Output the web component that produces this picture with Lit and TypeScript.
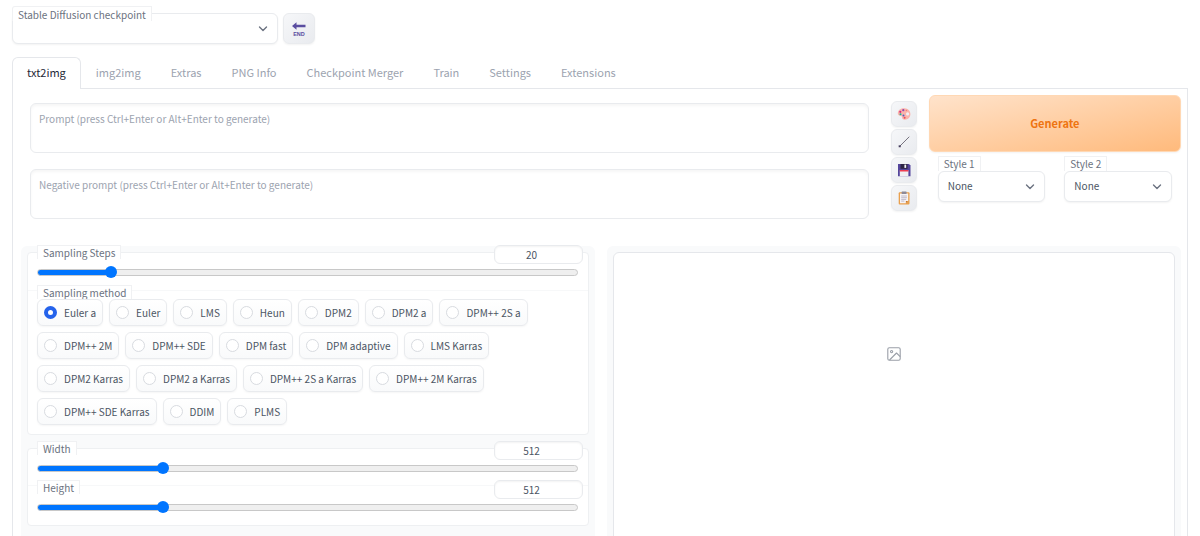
import { LitElement, html, css, svg } from "lit";
import { customElement, state, property } from "lit/decorators.js";
import { styleMap } from "lit/directives/style-map.js";
import { classMap } from "lit/directives/class-map.js";

const shared = css`
  * {
    box-sizing: border-box;
  }
  button,
  input,
  select,
  textarea {
    font: inherit;
    color: inherit;
    margin: 0;
  }
  .tag {
    display: block;
    width: max-content;
    height: 14px;
    padding: 0 5px;
    font-size: 10px;
    line-height: 14px;
    color: #6b7280;
    background: #fff;
    border: solid #f0f1f3;
    border-width: 1px 1px 0;
    white-space: nowrap;
  }
`;

@customElement("drop-down")
export class DropDown extends LitElement {
  @property() label = "";
  @property({ type: Boolean, reflect: true }) inset = false;
  @property({ type: Array }) options: string[] = [];

  static styles = [
    shared,
    css`
      :host {
        display: block;
        min-width: 0;
      }
      .box {
        display: grid;
        align-items: center;
      }
      select,
      svg {
        grid-area: 1 / 1;
      }
      select {
        appearance: none;
        width: 100%;
        height: 31px;
        padding: 0 28px 2px 9px;
        font-size: 10px;
        line-height: 16px;
        color: #4b5563;
        background: #fff;
        border: 1px solid #e9ebee;
        border-radius: 6px;
        box-shadow: 0 1px 2px rgba(0, 0, 0, 0.05);
      }
      svg {
        justify-self: end;
        margin-right: 10px;
        pointer-events: none;
      }
      .tag {
        height: 15px;
      }
      :host([inset]) .tag {
        position: relative;
        z-index: 1;
        margin-bottom: -8px;
        line-height: 16px;
        border-radius: 3px 0 0 0;
      }
    `,
  ];

  render() {
    return html`
      <label class="tag" for="pick">${this.label}</label>
      <div class="box">
        <select id="pick">
          ${this.options.map((o) => html`<option>${o}</option>`)}
        </select>
        <svg width="10" height="10" viewBox="0 0 10 10" aria-hidden="true">
          <path d="M1.5 3 L5 6.5 L8.5 3" fill="none" stroke="#6b7280" stroke-width="1.4" stroke-linecap="round" stroke-linejoin="round" />
        </svg>
      </div>
    `;
  }
}

@customElement("slider-field")
export class SliderField extends LitElement {
  @property() label = "";
  @property({ type: Number }) min = 0;
  @property({ type: Number }) max = 100;
  @property({ type: Number }) step = 1;
  @property({ type: Number }) value = 0;

  static styles = [
    shared,
    css`
      :host {
        display: block;
      }
      .head {
        display: flex;
        justify-content: space-between;
        align-items: flex-start;
      }
      .number {
        width: 89px;
        height: 19px;
        padding: 0 20px 0 6px;
        font-size: 10px;
        line-height: 16px;
        text-align: center;
        color: #4b5563;
        background: #fff;
        border: 1px solid #e9ebee;
        border-radius: 6px;
        box-shadow: inset 0 1px 2px rgba(0, 0, 0, 0.05);
        appearance: textfield;
      }
      .number::-webkit-inner-spin-button {
        display: none;
      }
      .range {
        appearance: none;
        display: block;
        width: calc(100% - 5px);
        height: 12px;
        margin-top: 2px;
        background: none;
      }
      .range::-webkit-slider-runnable-track {
        height: 7px;
        border-radius: 4px;
        border: 1px solid #c8c8c8;
        background: linear-gradient(#0075ff, #0075ff) 0 0 / var(--fill) 100% no-repeat border-box, #efefef;
      }
      .range::-webkit-slider-thumb {
        appearance: none;
        width: 12px;
        height: 12px;
        margin-top: -4px;
        border-radius: 50%;
        background: #0075ff;
      }
    `,
  ];

  private onValue(e: Event) {
    this.value = Number((e.target as HTMLInputElement).value);
  }

  render() {
    const fill = ((this.value - this.min) / (this.max - this.min)) * 100;
    return html`
      <div class="head">
        <label class="tag" for="range">${this.label}</label>
        <input class="number" type="number" aria-label=${this.label} min=${this.min} max=${this.max} step=${this.step} .value=${String(this.value)} @input=${this.onValue} />
      </div>
      <input class="range" id="range" type="range" min=${this.min} max=${this.max} step=${this.step} .value=${String(this.value)} style=${styleMap({ "--fill": fill + "%" })} @input=${this.onValue} />
    `;
  }
}

const palette = svg`<svg width="14" height="14" viewBox="0 0 14 14">
  <path d="M7.500 1.300C4.200 1.100 1 2.900.8 6c-.1 1.900 1.200 2.800 2.600 2.800 1.300 0 1.500.8 1.600 1.700.2 1.500 1.300 2.200 2.900 2.200 3.200 0 5.500-2.600 5.500-5.700 0-3.400-2.600-5.500-5.900-5.700Zm3.100 4a1.600 1.600 0 1 1 0 3.200 1.600 1.600 0 0 1 0-3.200Z" fill="#fbb3ab" fill-rule="evenodd"/>
  <circle cx="6.300" cy="3.200" r="1.100" fill="#8b4bb0"/><circle cx="3.300" cy="4.800" r="1.100" fill="#d8287c"/>
  <circle cx="3.500" cy="7.200" r="1" fill="#18b892"/><circle cx="6.500" cy="8.400" r="1" fill="#4b63c8"/><circle cx="7.600" cy="10.800" r="1" fill="#e8505b"/><circle cx="9.400" cy="3.500" r=".8" fill="#ee8478"/>
</svg>`;
const arrow = svg`<svg width="14" height="14" viewBox="0 0 14 14">
  <path d="M2.800 11.200 12 2" stroke="#77737f" stroke-width="1" stroke-linecap="round"/>
  <path d="M1.700 10.300 3.700 10.500 3.800 12.300 1.700 12.300Z" fill="#433b5b"/>
</svg>`;
const floppy = svg`<svg width="14" height="14" viewBox="0 0 14 14">
  <path d="M1 1h11l1.500 1.500V13.300H1Z" fill="#54459b"/>
  <rect x="3.500" y="1" width="7" height="4.800" fill="#2c2444"/><rect x="7.400" y="1.600" width="1.800" height="3.300" fill="#f4f4f4"/>
  <rect x="2.800" y="7.200" width="8.600" height="6.100" fill="#efeff2"/><rect x="2.800" y="7" width="8.600" height="1.500" fill="#ef3e52"/>
</svg>`;
const clipboard = svg`<svg width="14" height="14" viewBox="0 0 14 14">
  <rect x="1.700" y="1.200" width="10.800" height="12.300" rx="1" fill="#e9a04e"/><path d="M3 2.500h8.200v7.400l-2.300 2.400H3Z" fill="#f6f3f6"/>
  <path d="M11.200 9.900H8.900v2.400Z" fill="#c87728"/><rect x="4.600" y=".5" width="5" height="2.400" rx=".6" fill="#8d8998"/>
  <path d="M4.200 5h5.700M4.200 6.700h5.700M4.200 8.400h5M4.200 10.100h3.200" stroke="#aaa4b8" stroke-width=".7"/>
</svg>`;

@customElement("app-root")
export class AppRoot extends LitElement {
  @state() private tab = "txt2img";
  @state() private method = "Euler a";

  private tabs = ["txt2img", "img2img", "Extras", "PNG Info", "Checkpoint Merger", "Train", "Settings", "Extensions"];
  private methods = [
    "Euler a", "Euler", "LMS", "Heun", "DPM2", "DPM2 a", "DPM++ 2S a", "DPM++ 2M", "DPM++ SDE",
    "DPM fast", "DPM adaptive", "LMS Karras", "DPM2 Karras", "DPM2 a Karras", "DPM++ 2S a Karras",
    "DPM++ 2M Karras", "DPM++ SDE Karras", "DDIM", "PLMS",
  ];
  private tools = [
    { name: "Read generation parameters", icon: palette },
    { name: "Clear prompt", icon: arrow },
    { name: "Save style", icon: floppy },
    { name: "Apply style", icon: clipboard },
  ];

  static styles = [
    shared,
    css`
      :host {
        display: flex;
        flex-direction: column;
        height: 100vh;
        overflow: hidden;
        padding: 6px 12px 0;
        box-sizing: border-box;
        background: #fff;
        font-family: "Noto Sans CJK SC", "Noto Sans", sans-serif;
        font-size: 10px;
        line-height: 16px;
        color: #4b5563;
      }
      .top {
        display: flex;
        align-items: flex-end;
        gap: 5px;
      }
      .checkpoint {
        width: 266px;
      }
      .tool {
        display: grid;
        place-items: center;
        width: 26px;
        height: 26px;
        padding: 0;
        border: 1px solid #e9ebee;
        border-radius: 6px;
        background: linear-gradient(to bottom right, #f6f7f9, #e9ebef);
        box-shadow: 0 1px 2px rgba(0, 0, 0, 0.05);
      }
      .tool.large {
        width: 32px;
        height: 31px;
      }
      .tabs {
        display: flex;
        margin-top: 13px;
        position: relative;
        z-index: 1;
      }
      .tab {
        height: 32px;
        padding: 0 14px 3px;
        border: solid transparent;
        border-width: 1px 1px 0;
        border-radius: 6px 6px 0 0;
        background: none;
        font-size: 11px;
        line-height: 18px;
        color: #9ca3af;
        white-space: nowrap;
      }
      .tab.active {
        color: #1f2937;
        background: #fff;
        border-color: #e5e7eb;
      }
      .panel {
        flex: 1;
        min-height: 0;
        margin-top: -1px;
        padding: 6px 6px 0 8px;
        border: solid #e5e7eb;
        border-width: 1px 1px 0;
      }
      .controls {
        display: grid;
        grid-template-columns: 17fr 26px 5fr;
        column-gap: 12px;
        align-items: start;
      }
      .prompts {
        display: grid;
        gap: 16px;
        padding: 8px 10px 0 9px;
      }
      .prompt {
        display: block;
        width: 100%;
        height: 50px;
        padding: 7px 8px;
        resize: none;
        background: #fff;
        border: 1px solid #e9ebee;
        border-radius: 6px;
        box-shadow: inset 0 2px 3px rgba(0, 0, 0, 0.04);
      }
      .prompt::placeholder {
        color: #9ca3af;
      }
      .tools {
        display: grid;
        gap: 2px;
        padding-top: 6px;
      }
      .generate {
        display: block;
        width: 100%;
        height: 57px;
        padding: 0 0 2px;
        border: 1px solid #ffd8b4;
        border-radius: 6px;
        background: linear-gradient(to bottom right, #ffe3cb, #ffba7c);
        color: #ee7411;
        font-size: 11px;
        font-weight: 600;
        box-shadow: 0 1px 2px rgba(0, 0, 0, 0.05);
      }
      .styles {
        display: grid;
        grid-template-columns: 1fr 1fr;
        gap: 19px;
        padding: 4px 9px 0;
      }
      .work {
        display: grid;
        grid-template-columns: 1fr 1fr;
        gap: 12px;
        margin-top: 27px;
        height: 100%;
      }
      .column {
        padding: 6px;
        min-width: 0;
        background: #f9fafb;
        border-radius: 6px;
      }
      .group {
        padding: 0 5px 9px 9px;
        background: #fff;
        border: 1px solid #eef0f2;
        border-radius: 4px;
      }
      .group + .group {
        margin-top: 13px;
      }
      .group > slider-field:first-child {
        margin-top: -8px;
      }
      .next,
      .methods {
        margin: 6px -5px 0 -9px;
        padding: 0 5px 0 9px;
        background: linear-gradient(#f7f8f9, #f7f8f9) 0 5px / 100% 1px no-repeat;
      }
      .methods {
        margin-top: 7px;
      }
      .pills {
        display: flex;
        flex-wrap: wrap;
        gap: 6px;
      }
      .pill {
        display: flex;
        align-items: center;
        gap: 7px;
        height: 27px;
        padding: 0 6px;
        background: linear-gradient(#fff, #f9fafb);
        border: 1px solid #e9ebee;
        border-radius: 6px;
        box-shadow: 0 1px 2px rgba(0, 0, 0, 0.04);
        white-space: nowrap;
      }
      .pill input {
        appearance: none;
        width: 13px;
        height: 13px;
        border: 1px solid #d8dbe0;
        border-radius: 50%;
        background: #fff;
      }
      .pill input:checked {
        border: 4px solid #2563eb;
      }
      .last {
        padding-bottom: 12px;
      }
      .preview {
        display: grid;
        justify-items: center;
        height: 100%;
        padding-top: 94px;
        align-content: start;
        background: #fff;
        border: 1px solid #e5e7eb;
        border-radius: 6px;
      }
    `,
  ];

  render() {
    return html`
      <header class="top">
        <drop-down class="checkpoint" inset label="Stable Diffusion checkpoint" .options=${[""]}></drop-down>
        <button class="tool large" aria-label="Refresh checkpoints">
          <svg width="14" height="14" viewBox="0 0 14 14">
            <path d="M0 4 4.500.300V2.800H13.500V5.200H4.500V7.700Z" fill="#5a4da0" />
            <text x="7" y="13.500" text-anchor="middle" font-family="Liberation Sans" font-size="5.500" font-weight="700" fill="#5a4da0">END</text>
          </svg>
        </button>
      </header>
      <nav class="tabs" role="tablist">
        ${this.tabs.map(
          (t) => html`<button role="tab" aria-selected=${t === this.tab} class=${classMap({ tab: true, active: t === this.tab })} @click=${() => (this.tab = t)}>${t}</button>`
        )}
      </nav>
      <main class="panel">
        <section class="controls">
          <div class="prompts">
            <textarea class="prompt" aria-label="Prompt" placeholder="Prompt (press Ctrl+Enter or Alt+Enter to generate)"></textarea>
            <textarea class="prompt" aria-label="Negative prompt" placeholder="Negative prompt (press Ctrl+Enter or Alt+Enter to generate)"></textarea>
          </div>
          <div class="tools">${this.tools.map((t) => html`<button class="tool" aria-label=${t.name}>${t.icon}</button>`)}</div>
          <div>
            <button class="generate">Generate</button>
            <div class="styles">
              <drop-down label="Style 1" .options=${["None"]}></drop-down>
              <drop-down label="Style 2" .options=${["None"]}></drop-down>
            </div>
          </div>
        </section>
        <section class="work">
          <div class="column">
            <div class="group">
              <slider-field label="Sampling Steps" min="1" max="150" value="20"></slider-field>
              <div class="methods" role="radiogroup" aria-labelledby="method-label">
                <span class="tag" id="method-label">Sampling method</span>
                <div class="pills">
                  ${this.methods.map(
                    (m) => html`<label class="pill"><input type="radio" name="method" .checked=${m === this.method} @change=${() => (this.method = m)} />${m}</label>`
                  )}
                </div>
              </div>
            </div>
            <div class="group last">
              <slider-field label="Width" min="64" max="2048" step="8" value="512"></slider-field>
              <slider-field class="next" label="Height" min="64" max="2048" step="8" value="512"></slider-field>
            </div>
          </div>
          <div class="column">
            <div class="preview">
              <svg width="14" height="14" viewBox="0 0 14 14" fill="none" stroke="#9a9fa8" stroke-width="1.100" stroke-linejoin="round">
                <rect x=".8" y=".8" width="12.400" height="12.400" rx="1.500" />
                <circle cx="4.600" cy="4.600" r="1.100" />
                <path d="M2.500 13 9.500 6 13.200 9.700" />
              </svg>
            </div>
          </div>
        </section>
      </main>
    `;
  }
}
